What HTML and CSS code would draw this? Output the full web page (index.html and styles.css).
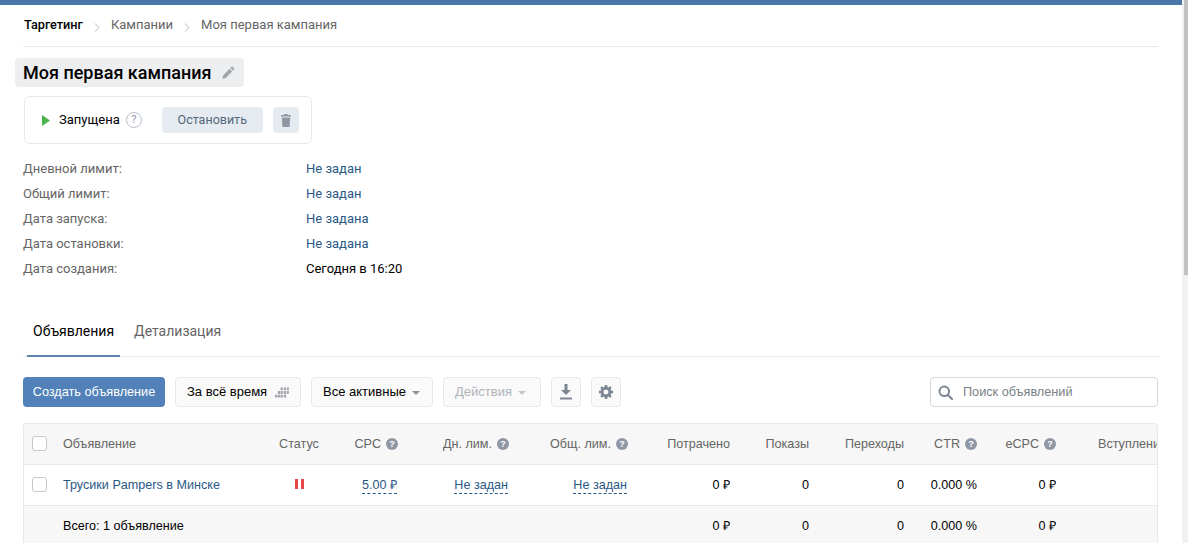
FILE: index.html
```html
<!DOCTYPE html>
<html lang="ru">
<head>
<meta charset="utf-8">
<title>Моя первая кампания</title>
<link rel="stylesheet" href="styles.css">
</head>
<body>
<div class="topbar"></div>
<main class="page">
  <nav class="crumbs">
    <a class="crumb crumb-root">Таргетинг</a>
    <svg class="crumb-sep" width="6" height="9" viewBox="0 0 6 9"><path d="M1 .5l4 4-4 4" fill="none" stroke="#b5b8bd" stroke-width="1"/></svg>
    <a class="crumb">Кампании</a>
    <svg class="crumb-sep" width="6" height="9" viewBox="0 0 6 9"><path d="M1 .5l4 4-4 4" fill="none" stroke="#b5b8bd" stroke-width="1"/></svg>
    <a class="crumb">Моя первая кампания</a>
  </nav>

  <div class="title-chip">
    <h1 class="title">Моя первая кампания</h1>
    <svg class="pencil" width="13" height="13" viewBox="0 0 14 14"><path d="M10.2.9a.8.8 0 0 1 1.1 0l1.8 1.8a.8.8 0 0 1 0 1.1l-1.3 1.3-2.9-2.9zM8.1 3l2.900 2.900-7.200 7.200-3.400.7.7-3.600z" fill="#a3a7ad"/></svg>
  </div>

  <section class="status-box">
    <svg class="play" width="8" height="11" viewBox="0 0 8 11"><path d="M0 0l8 5.500L0 11z" fill="#4bb34b"/></svg>
    <span class="status-text">Запущена</span>
    <span class="q-ring">?</span>
    <button class="btn-stop">Остановить</button>
    <button class="btn-trash">
      <svg width="10" height="13" viewBox="0 0 10 13"><path d="M3.500 0h3l.5 1h3v1.500H0V1h3zM.8 3.500h8.400L8.500 13h-7z" fill="#8f97a5"/></svg>
    </button>
  </section>

  <dl class="info">
    <div class="info-row"><dt>Дневной лимит:</dt><dd class="info-link">Не задан</dd></div>
    <div class="info-row"><dt>Общий лимит:</dt><dd class="info-link">Не задан</dd></div>
    <div class="info-row"><dt>Дата запуска:</dt><dd class="info-link">Не задана</dd></div>
    <div class="info-row"><dt>Дата остановки:</dt><dd class="info-link">Не задана</dd></div>
    <div class="info-row"><dt>Дата создания:</dt><dd>Сегодня в 16:20</dd></div>
  </dl>

  <div class="tabs">
    <a class="tab tab-active">Объявления</a>
    <a class="tab">Детализация</a>
  </div>

  <div class="toolbar">
    <button class="btn btn-primary">Создать объявление</button>
    <button class="btn btn-period">За всё время
      <svg width="15" height="11" viewBox="0 0 15 11" fill="#a3a7ad"><path d="M6 0h2.500v3H6zM9.500 0H12v3H9.500zM12.800 0H15v3h-2.200zM3 4h2.500v3H3zM6 4h2.500v3H6zM9.500 4H12v3H9.500zM12.800 4H15v3h-2.200zM0 8h2.500v3H0zM3 8h2.500v3H3zM6 8h2.500v3H6zM9.500 8H12v3H9.500z"/></svg>
    </button>
    <button class="btn btn-drop btn-all">Все активные<span class="caret"></span></button>
    <button class="btn btn-drop btn-disabled">Действия<span class="caret"></span></button>
    <button class="btn btn-icon">
      <svg width="14" height="16" viewBox="0 0 14 16"><path d="M5.500 0h3v6H12L7 11 2 6h3.500zM1 13.500h12V15.500H1z" fill="#7d8794"/></svg>
    </button>
    <button class="btn btn-icon">
      <svg width="14" height="14" viewBox="0 0 14 14"><path fill-rule="evenodd" d="M5.800 0h2.400l.3 1.900 1.100.5L11.200 1.300l1.500 1.500-1.100 1.600.5 1.100 1.900.3v2.400l-1.900.3-.5 1.100 1.100 1.600-1.500 1.500-1.600-1.100-1.100.5-.3 1.900H5.800l-.3-1.900-1.100-.5-1.600 1.100-1.500-1.500 1.100-1.600-.5-1.100L0 8.200V5.800l1.900-.3.500-1.100L1.300 2.800l1.500-1.500 1.600 1.100 1.100-.5zM7 4.500a2.500 2.500 0 1 0 0 5 2.500 2.500 0 0 0 0-5z" fill="#7d8794"/></svg>
    </button>
    <label class="search">
      <svg width="15" height="15" viewBox="0 0 15 15"><circle cx="6.300" cy="6.300" r="4.800" fill="none" stroke="#7d8794" stroke-width="2"/><path d="M10 10l4 4" stroke="#7d8794" stroke-width="2.200" stroke-linecap="round"/></svg>
      <input class="search-input" type="text" placeholder="Поиск объявлений">
    </label>
  </div>

  <div class="table-wrap">
    <table class="ads">
      <colgroup>
        <col class="c-check"><col class="c-name"><col class="c-status"><col class="c-cpc"><col class="c-day"><col class="c-total"><col class="c-spent"><col class="c-views"><col class="c-clicks"><col class="c-ctr"><col class="c-ecpc"><col class="c-join">
      </colgroup>
      <thead>
        <tr>
          <th class="cell-check"><span class="checkbox"></span></th>
          <th class="left">Объявление</th>
          <th class="center">Статус</th>
          <th>CPC<span class="help">?</span></th>
          <th>Дн. лим.<span class="help">?</span></th>
          <th>Общ. лим.<span class="help">?</span></th>
          <th>Потрачено</th>
          <th>Показы</th>
          <th>Переходы</th>
          <th>CTR<span class="help">?</span></th>
          <th>eCPC<span class="help">?</span></th>
          <th class="cell-join">Вступления</th>
        </tr>
      </thead>
      <tbody>
        <tr>
          <td class="cell-check"><span class="checkbox"></span></td>
          <td class="left"><a class="ad-link">Трусики Pampers в Минске</a></td>
          <td class="center"><span class="pause"></span></td>
          <td class="cell-dashed"><a class="dashed">5.00 ₽</a></td>
          <td class="cell-dashed"><a class="dashed">Не задан</a></td>
          <td class="cell-dashed"><a class="dashed">Не задан</a></td>
          <td>0 ₽</td>
          <td>0</td>
          <td>0</td>
          <td>0.000 %</td>
          <td>0 ₽</td>
          <td></td>
        </tr>
      </tbody>
      <tfoot>
        <tr>
          <td class="cell-check"></td>
          <td class="left" colspan="2">Всего: 1 объявление</td>
          <td></td>
          <td></td>
          <td></td>
          <td>0 ₽</td>
          <td>0</td>
          <td>0</td>
          <td>0.000 %</td>
          <td>0 ₽</td>
          <td></td>
        </tr>
      </tfoot>
    </table>
  </div>
</main>
<div class="scrollbar"><div class="scroll-thumb"></div></div>
</body>
</html>
```

FILE: styles.css
```css
* { box-sizing: border-box; }
html, body { height: 100%; overflow: hidden; }
body {
  margin: 0;
  background: #fff;
  color: #000;
  font: 13px/16px Roboto, "Liberation Sans", sans-serif;
}
button { font: inherit; cursor: pointer; }
a { color: inherit; text-decoration: none; }

.topbar { width: 1182px; height: 5px; background: #4a76a8; }
.page { width: 1182px; padding: 0 24px 0 23px; }

.crumbs {
  display: flex;
  align-items: center;
  height: 42px;
  padding-bottom: 1px;
  border-bottom: 1px solid #e7e8ec;
  color: #656565;
}
.crumb-root { margin-left: 1px; color: #000; font-weight: 500; font-size: 12.700px; }
.crumb-sep { margin: 4px 11px 0 11px; }

.title-chip {
  display: inline-flex;
  align-items: center;
  height: 29px;
  margin: 11px 0 0 -8px;
  padding: 0 9px 0 8px;
  border-radius: 4px;
  background: #edeef0;
}
.title { margin: 0; font-size: 18px; line-height: 22px; font-weight: 500; }
.pencil { margin-left: 10px; }

.status-box {
  display: flex;
  align-items: center;
  width: 288px;
  height: 48px;
  margin: 9px 0 0 1px;
  padding-left: 17px;
  border: 1px solid #e7e8ec;
  border-radius: 6px;
}
.status-text { margin-left: 9px; }
.q-ring {
  width: 16px; height: 16px;
  margin-left: 6px;
  border: 1px solid #b8c0cc;
  border-radius: 50%;
  color: #939aa6;
  font-size: 11px;
  line-height: 14px;
  text-align: center;
}
.btn-stop {
  width: 101px; height: 26px;
  margin-left: 20px;
  border: 0;
  border-radius: 4px;
  background: #e5ebf1;
  color: #55677d;
  font-size: 12.500px;
}
.btn-trash {
  display: flex; align-items: center; justify-content: center;
  width: 26px; height: 26px;
  margin-left: 10px;
  padding: 0;
  border: 0;
  border-radius: 4px;
  background: #e5ebf1;
}

.info { margin: 12px 0 0; }
.info-row { display: flex; height: 25px; align-items: center; }
.info-row dt { width: 283px; color: #656565; }
.info-row dd { margin: 0; }
.info-row .info-link { color: #2a5885; }

.tabs {
  display: flex;
  height: 51px;
  margin-top: 25px;
  margin-right: -1px;
  padding: 0 0 0 4px;
  border-bottom: 1px solid #e7e8ec;
  font-size: 14px;
}
.tab {
  height: 51px;
  margin-right: 2px;
  padding: 17px 6px 0;
  color: #656565;
}
.tab + .tab { margin-left: 6px; }
.tab-active { color: #000; border-bottom: 2px solid #5f84ad; }

.toolbar {
  display: flex;
  align-items: center;
  gap: 10px;
  height: 30px;
  margin-top: 20px;
  font-family: "Liberation Sans", Arial, sans-serif;
  font-size: 13px;
}
.btn {
  display: flex;
  align-items: center;
  height: 30px;
  padding: 0 11px;
  border: 1px solid #e7e8ec;
  border-radius: 4px;
  background: #fafafa;
  color: #000;
  font: inherit;
  white-space: nowrap;
}
.btn-primary {
  width: 142px;
  justify-content: center;
  padding: 0;
  border: 0;
  background: #5181b8;
  color: #fff;
  font-size: 12.700px;
}
.btn-period { width: 126px; gap: 8px; }
.btn-drop { gap: 6px; width: 98px; }
.btn-all { width: 122px; }
.btn-disabled { color: #aeb3b9; }
.btn-icon { width: 30px; padding: 0; justify-content: center; }
.caret {
  width: 0; height: 0;
  margin-top: 2px;
  border: 4px solid transparent;
  border-top-color: #8e949c;
  border-bottom: 0;
}
.btn-disabled .caret { border-top-color: #c2c6cb; }
.search {
  display: flex;
  align-items: center;
  gap: 10px;
  width: 228px;
  height: 30px;
  margin-left: auto;
  padding-left: 7px;
  border: 1px solid #d3d9de;
  border-radius: 4px;
}
.search-input {
  flex: 1;
  min-width: 0;
  border: 0;
  padding: 0;
  outline: 0;
  background: transparent;
  font: inherit;
  font-size: 12.700px;
}
.search-input::placeholder { color: #7a7f86; opacity: 1; }

.table-wrap {
  width: 1135px;
  margin-top: 16px;
  border: 1px solid #e7e8ec;
  border-bottom: 0;
  border-radius: 4px 4px 0 0;
  overflow: hidden;
}
.ads {
  table-layout: fixed;
  width: 1133px;
  border-collapse: collapse;
  white-space: nowrap;
  font-family: "Liberation Sans", Arial, sans-serif;
  font-size: 12.600px;
}
.c-check { width: 39px; }
.c-name { width: 205px; }
.c-status { width: 62px; }
.c-cpc { width: 68px; }
.c-day { width: 111px; }
.c-total { width: 119px; }
.c-spent { width: 102px; }
.c-views { width: 79px; }
.c-clicks { width: 95px; }
.c-ctr { width: 73px; }
.c-ecpc { width: 79px; }
.c-join { width: 101px; }

.ads th, .ads td {
  height: 40px;
  padding: 0;
  text-align: right;
  font-weight: 400;
  overflow: hidden;
}
.ads th { background: #f7f7f7; color: #656565; }
.ads tbody td { height: 41px; border-top: 1px solid #e7e8ec; border-bottom: 1px solid #e7e8ec; }
.ads tbody .cell-dashed { padding-right: 1px; }
.ads tfoot td { height: 41px; background: #f7f7f7; }
.ads .left { text-align: left; }
.ads .center { text-align: center; }
.ads .cell-check { padding-left: 8px; text-align: left; }
.ads .cell-join { padding-left: 42px; text-align: left; }
.checkbox {
  display: block;
  width: 15px; height: 15px;
  border: 1px solid #c1c9d1;
  border-radius: 3px;
  background: #fff;
}
.help {
  display: inline-block;
  width: 12px; height: 12px;
  margin-left: 5px;
  border-radius: 50%;
  background: #8f97a5;
  color: #fff;
  font-size: 9px;
  font-weight: 700;
  line-height: 12px;
  text-align: center;
  vertical-align: 1px;
}
.ad-link { color: #2a5885; }
.dashed { color: #2a5885; border-bottom: 1px dashed #2a5885; padding-bottom: 1px; }
.pause {
  display: inline-block;
  width: 9px; height: 10px;
  margin-top: 2px;
  border-left: 3px solid #e64646;
  border-right: 3px solid #e64646;
}

.scrollbar {
  position: fixed;
  top: 0; right: 0; bottom: 0;
  width: 6px;
  padding-left: 2px;
  background: #f1f1f1;
}
.scroll-thumb { height: 275px; background: #c1c1c1; }
```
